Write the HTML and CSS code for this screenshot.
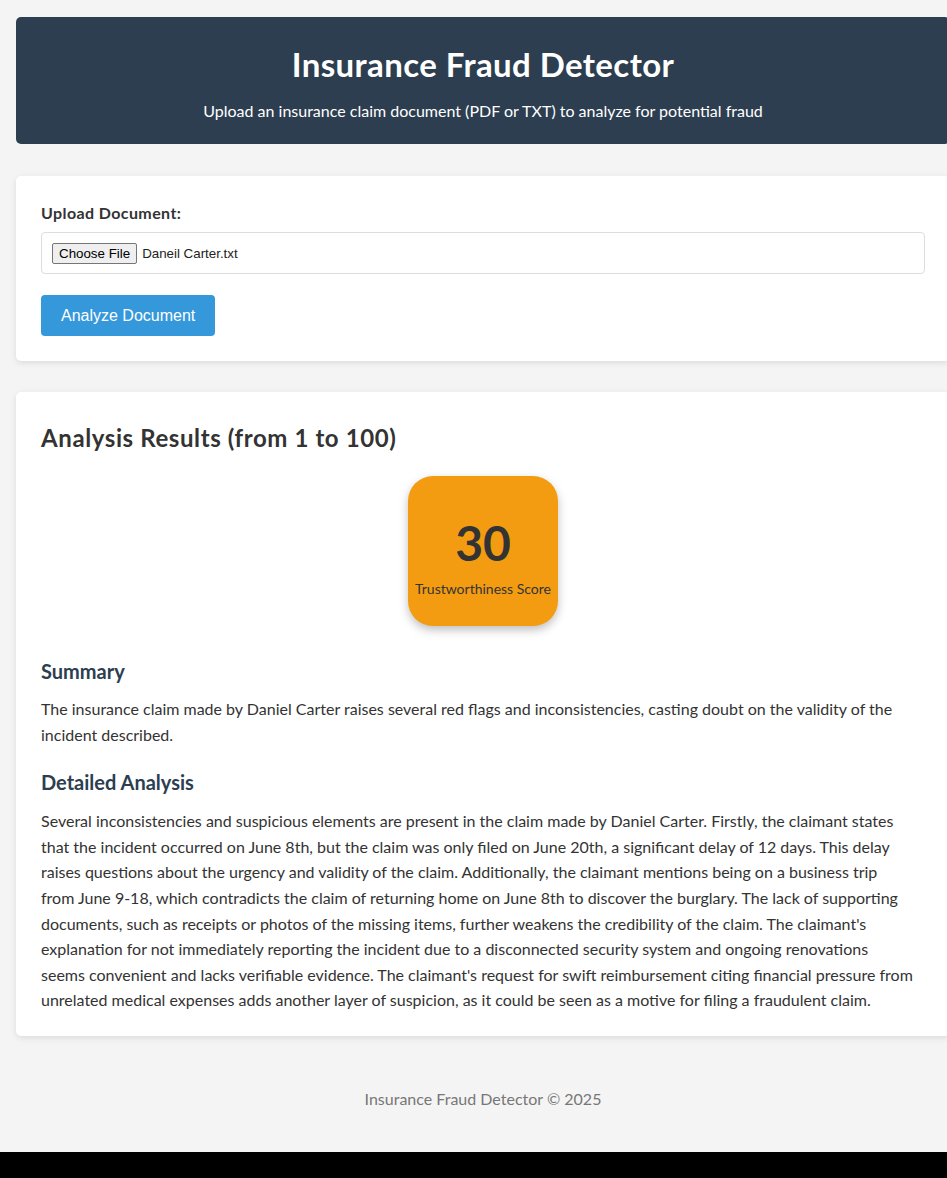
FILE: index.html
```html
<!DOCTYPE html>
<html lang="en">
<head>
<meta charset="utf-8">
<title>Insurance Fraud Detector</title>
<link rel="stylesheet" href="styles.css">
</head>
<body>
<div class="page">
  <header class="hero">
    <h1 class="hero-title">Insurance Fraud Detector</h1>
    <p class="hero-sub">Upload an insurance claim document (PDF or TXT) to analyze for potential fraud</p>
  </header>

  <section class="card upload-card">
    <label class="field-label">Upload Document:</label>
    <div class="file-box">
      <button class="file-btn" type="button">Choose File</button>
      <span class="file-name">Daneil Carter.txt</span>
    </div>
    <button class="analyze-btn" type="button">Analyze Document</button>
  </section>

  <section class="card results-card">
    <h2 class="results-title">Analysis Results (from 1 to 100)</h2>
    <div class="score-wrap">
      <div class="score-box">
        <div class="score-num">30</div>
        <div class="score-label">Trustworthiness Score</div>
      </div>
    </div>
    <h3 class="sec-title sec-summary">Summary</h3>
    <p class="sec-text">The insurance claim made by Daniel Carter raises several red flags and inconsistencies, casting doubt on the validity of the incident described.</p>
    <h3 class="sec-title sec-detail">Detailed Analysis</h3>
    <p class="sec-text detail-text">Several inconsistencies and suspicious elements are present in the claim made by Daniel Carter. Firstly, the claimant states<br>that the incident occurred on June 8th, but the claim was only filed on June 20th, a significant delay of 12 days. This delay<br>raises questions about the urgency and validity of the claim. Additionally, the claimant mentions being on a business trip<br>from June 9-18, which contradicts the claim of returning home on June 8th to discover the burglary. The lack of supporting<br>documents, such as receipts or photos of the missing items, further weakens the credibility of the claim. The claimant's<br>explanation for not immediately reporting the incident due to a disconnected security system and ongoing renovations<br>seems convenient and lacks verifiable evidence. The claimant's request for swift reimbursement citing financial pressure from<br>unrelated medical expenses adds another layer of suspicion, as it could be seen as a motive for filing a fraudulent claim.</p>
  </section>

  <footer class="foot">Insurance Fraud Detector © 2025</footer>
</div>
<div class="bottom-bar"></div>
</body>
</html>
```
FILE: styles.css
```css
html, body {
  margin: 0;
  padding: 0;
}
body {
  background: #f4f4f4;
  font-family: "Lato", "Open Sans", sans-serif;
  color: #333;
  overflow-x: hidden;
}
.page {
  width: 934px;
  margin-left: 16px;
  padding-top: 17px;
  padding-bottom: 41px;
}
.hero {
  background: #2c3e50;
  color: #fff;
  border-radius: 5px;
  padding: 20px 20px 21px;
  text-align: center;
}
.hero-title {
  margin: 7px 0 0;
  font-size: 33px;
  line-height: 40px;
  font-weight: 700;
  letter-spacing: 0.4px;
}
.hero-sub {
  margin: 15px 0 0;
  font-size: 16px;
  line-height: 24px;
}
.card {
  background: #fff;
  border-radius: 5px;
  box-shadow: 0 2px 6px rgba(0,0,0,0.1);
  padding: 25px;
}
.upload-card {
  margin-top: 32px;
}
.field-label {
  display: block;
  font-weight: 700;
  font-size: 16px;
  line-height: 24px;
  letter-spacing: 0.4px;
  margin-bottom: 7px;
}
.file-box {
  border: 1px solid #ddd;
  border-radius: 4px;
  padding: 10px;
  display: flex;
  align-items: center;
  height: 20px;
}
.file-btn {
  font-family: "Liberation Sans", Arial, sans-serif;
  font-size: 13.33px;
  color: #000;
  background: #efefef;
  border: 1px solid #767676;
  border-radius: 2px;
  padding: 1px 6px;
  height: 21px;
  margin: 0 5px 0 0;
}
.file-name {
  font-family: "Liberation Sans", Arial, sans-serif;
  font-size: 13.33px;
  color: #222;
}
.analyze-btn {
  margin-top: 21px;
  background: #3498db;
  color: #fff;
  border: none;
  border-radius: 4px;
  padding: 0 20px;
  height: 41px;
  font-family: "Liberation Sans", Arial, sans-serif;
  font-size: 16px;
  cursor: pointer;
}
.results-card {
  margin-top: 31px;
  padding-bottom: 23px;
}
.results-title {
  margin: 5px 0 0;
  font-size: 24px;
  line-height: 32px;
  font-weight: 700;
  letter-spacing: 0.6px;
  color: #333;
}
.score-wrap {
  display: flex;
  justify-content: center;
  margin-top: 22px;
}
.score-box {
  width: 150px;
  height: 150px;
  box-sizing: border-box;
  padding-top: 39px;
  background: #f39c12;
  border-radius: 25px;
  box-shadow: 0 4px 10px rgba(0,0,0,0.25);
  text-align: center;
}
.score-num {
  font-size: 48px;
  line-height: 56px;
  font-weight: 700;
  color: #333;
}
.score-label {
  margin-top: 8px;
  font-size: 14px;
  line-height: 20px;
  color: #333;
}
.sec-title {
  margin: 0;
  font-size: 20px;
  line-height: 28px;
  font-weight: 700;
  color: #2c3e50;
}
.sec-summary {
  margin-top: 31px;
}
.sec-detail {
  margin-top: 21px;
}
.sec-text {
  margin: 11px 0 0;
  font-size: 16px;
  line-height: 25.6px;
  color: #333;
}
.detail-text {
  margin-top: 12px;
}
.foot {
  margin-top: 51px;
  text-align: center;
  font-size: 16px;
  line-height: 24px;
  color: #777;
}
.bottom-bar {
  height: 26px;
  background: #000;
}
```
